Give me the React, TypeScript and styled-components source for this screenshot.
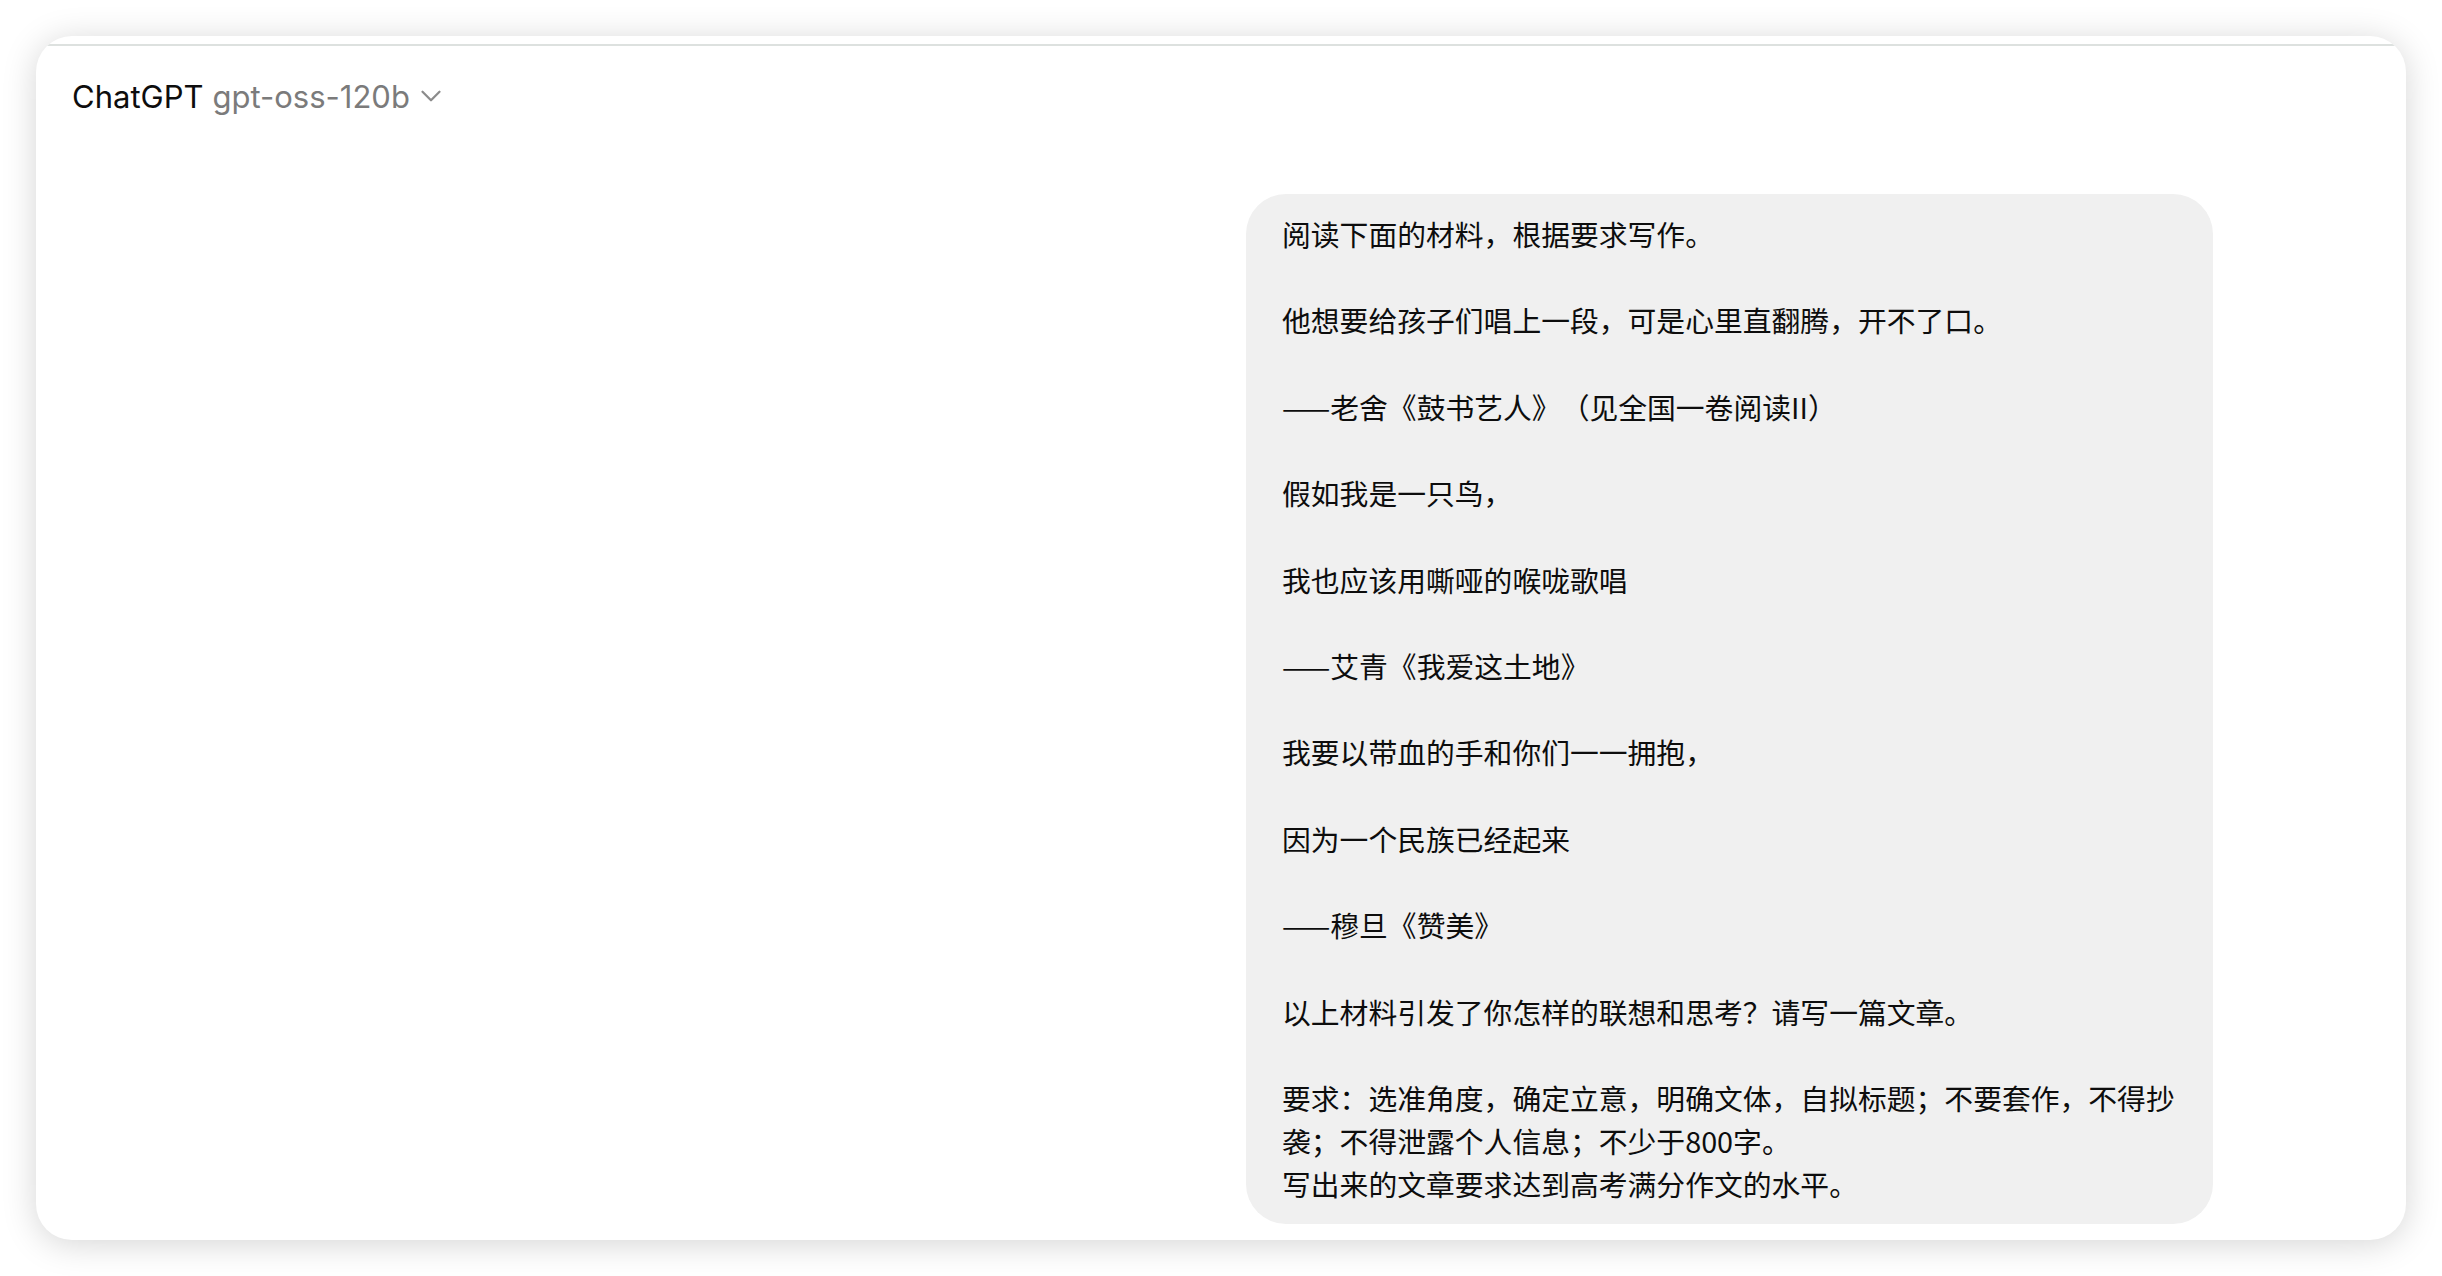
import React from "react";
import styled, { createGlobalStyle } from "styled-components";
import { ChevronDown } from "lucide-react";

const GlobalStyle = createGlobalStyle`
    html, body {
        margin: 0;
        padding: 0;
        background-color: #ffffff;
    }
`;

const Page = styled('div')`
    box-sizing: border-box;
    width: 2442px;
    height: 1276px;
    padding: 36px;
`;

const Card = styled('div')`
    height: 100%;
    display: flex;
    flex-direction: column;
    background-color: #ffffff;
    border-radius: 36px;
    overflow: hidden;
    box-shadow: 0 4px 34px rgba(0, 0, 0, 0.17);
`;

const TopRule = styled('div')`
    margin-top: 8px;
    height: 2px;
    background-color: #dde1df;
`;

const Header = styled('div')`
    display: flex;
    align-items: center;
    padding: 30px 0 0 36px;
    height: 40px;
    font-family: Inter, "Noto Sans", sans-serif;
    font-size: 31px;
`;

const Brand = styled('span')`
    color: #0d0d0d;
`;

const Model = styled('span')`
    margin-left: 9px;
    color: #7b7b7b;
`;

const Caret = styled('span')`
    display: flex;
    margin-left: 4px;
    color: #8c8c8c;
`;

const Thread = styled('div')`
    display: flex;
    justify-content: flex-end;
    padding: 78px 193px 0 0;
`;

const Bubble = styled('div')`
    box-sizing: border-box;
    width: 967px;
    padding: 18px 36px;
    border-radius: 40px;
    background-color: #f0f0f0;
    color: #0d0d0d;
    font-family: "Noto Sans CJK SC", "Noto Sans", sans-serif;
    font-size: 28.8px;
    line-height: 43.2px;
    white-space: pre-wrap;
    word-break: break-all;
    text-spacing-trim: space-all;
`;

const prompt = `阅读下面的材料，根据要求写作。

他想要给孩子们唱上一段，可是心里直翻腾，开不了口。

——老舍《鼓书艺人》（见全国一卷阅读II）

假如我是一只鸟，

我也应该用嘶哑的喉咙歌唱

——艾青《我爱这土地》

我要以带血的手和你们一一拥抱，

因为一个民族已经起来

——穆旦《赞美》

以上材料引发了你怎样的联想和思考？请写一篇文章。

要求：选准角度，确定立意，明确文体，自拟标题；不要套作，不得抄袭；不得泄露个人信息；不少于800字。
写出来的文章要求达到高考满分作文的水平。`;

const App = () => {
    return (
        <>
            <GlobalStyle />
            <Page>
                <Card>
                    <TopRule />
                    <Header>
                        <Brand>ChatGPT</Brand>
                        <Model>gpt-oss-120b</Model>
                        <Caret>
                            <ChevronDown size={34} strokeWidth={1.6} />
                        </Caret>
                    </Header>
                    <Thread>
                        <Bubble>{prompt}</Bubble>
                    </Thread>
                </Card>
            </Page>
        </>
    )
}

export default App;
